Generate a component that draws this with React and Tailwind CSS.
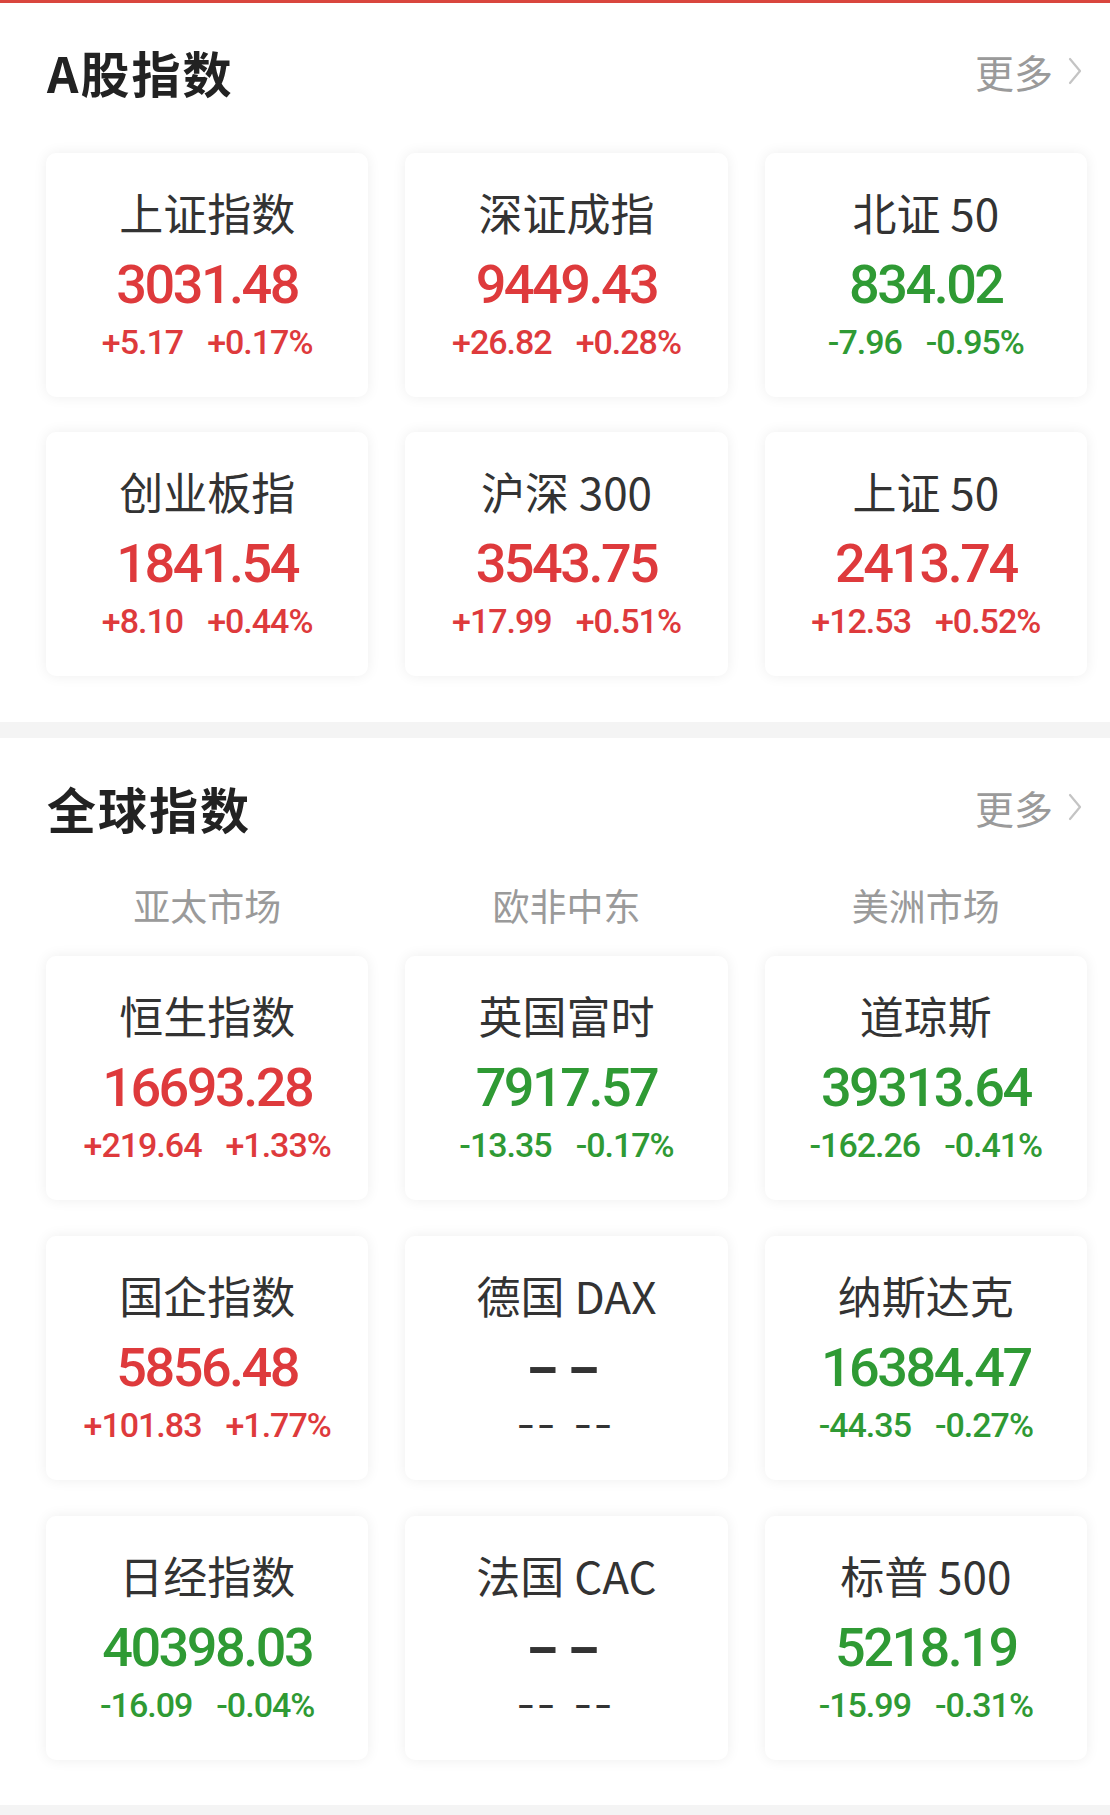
const RED = "text-[#de3a3c]";
const GREEN = "text-[#2f9a34]";

const aIndexes = [
  { name: "上证指数", price: "3031.48", change: "+5.17", pct: "+0.17%", up: true },
  { name: "深证成指", price: "9449.43", change: "+26.82", pct: "+0.28%", up: true },
  { name: "北证 50", price: "834.02", change: "-7.96", pct: "-0.95%", up: false },
  { name: "创业板指", price: "1841.54", change: "+8.10", pct: "+0.44%", up: true },
  { name: "沪深 300", price: "3543.75", change: "+17.99", pct: "+0.51%", up: true },
  { name: "上证 50", price: "2413.74", change: "+12.53", pct: "+0.52%", up: true },
];

const globalIndexes = [
  { name: "恒生指数", price: "16693.28", change: "+219.64", pct: "+1.33%", up: true },
  { name: "英国富时", price: "7917.57", change: "-13.35", pct: "-0.17%", up: false },
  { name: "道琼斯", price: "39313.64", change: "-162.26", pct: "-0.41%", up: false },
  { name: "国企指数", price: "5856.48", change: "+101.83", pct: "+1.77%", up: true },
  { name: "德国 DAX", price: null },
  { name: "纳斯达克", price: "16384.47", change: "-44.35", pct: "-0.27%", up: false },
  { name: "日经指数", price: "40398.03", change: "-16.09", pct: "-0.04%", up: false },
  { name: "法国 CAC", price: null },
  { name: "标普 500", price: "5218.19", change: "-15.99", pct: "-0.31%", up: false },
];

const cjk = { fontFamily: '"Noto Sans CJK SC", "Noto Sans", sans-serif' };
const num = { fontFamily: 'Roboto, "Noto Sans CJK SC", sans-serif' };

const SectionHeader = ({ title }) => (
  <div className="flex items-center justify-between h-[60px] pl-[47px] pr-[27px]">
    <h2 className="text-[49px] font-bold text-[#222] leading-none tracking-[2px]" style={cjk}>
      {title}
    </h2>
    <div className="flex items-center gap-[14px] text-[#9a9a9a]" style={cjk}>
      <span className="text-[39px] leading-none">更多</span>
      <svg width="16" height="30" viewBox="0 0 16 30" fill="none">
        <polyline points="3,3 13,15 3,27" stroke="#c4c4c4" strokeWidth="2.2" strokeLinecap="round" strokeLinejoin="round" />
      </svg>
    </div>
  </div>
);

const IndexCard = ({ item }) => {
  const color = item.up ? RED : GREEN;
  return (
    <div className="h-[244px] bg-white rounded-[10px] shadow-[0_0_14px_rgba(0,0,0,0.07)] flex flex-col items-center pt-[34px]">
      <div className="h-[50px] leading-[50px] text-[44px] text-[#333]" style={cjk}>
        {item.name}
      </div>
      {item.price ? (
        <>
          <div className={`mt-[16px] h-[64px] leading-[64px] text-[54px] font-medium tracking-[-2.5px] ${color}`} style={num}>
            {item.price}
          </div>
          <div className={`mt-[5px] h-[40px] leading-[40px] text-[34px] font-medium tracking-[-1px] flex gap-[24px] ${color}`} style={num}>
            <span>{item.change}</span>
            <span>{item.pct}</span>
          </div>
        </>
      ) : (
        <>
          <div className="mt-[16px] h-[64px] leading-[64px] text-[54px] font-bold text-[#333]" style={num}>
            <span className="inline-block scale-x-[1.7] tracking-[3px]">--</span>
          </div>
          <div className="mt-[5px] h-[40px] leading-[40px] text-[34px] font-medium text-[#333] flex gap-[30px]" style={num}>
            <span className="inline-block scale-x-[1.5] tracking-[2px]">--</span>
            <span className="inline-block scale-x-[1.5] tracking-[2px]">--</span>
          </div>
        </>
      )}
    </div>
  );
};

export default function App() {
  return (
    <div className="w-[1110px] min-h-[1815px] bg-[#f4f4f4]">
      <div className="h-[3px] bg-[#d9463e]" />

      <section className="bg-white pt-[38px] pb-[46px]">
        <SectionHeader title="A股指数" />
        <div className="mt-[52px] pl-[46px] pr-[23px] grid grid-cols-3 gap-x-[37px] gap-y-[35px]">
          {aIndexes.map((item) => (
            <IndexCard key={item.name} item={item} />
          ))}
        </div>
      </section>

      <section className="mt-[16px] bg-white pt-[39px] pb-[45px]">
        <SectionHeader title="全球指数" />
        <div className="mt-[44px] pl-[46px] pr-[23px] grid grid-cols-3 gap-x-[37px]">
          {["亚太市场", "欧非中东", "美洲市场"].map((t) => (
            <div key={t} className="h-[50px] flex items-center justify-center text-[37px] text-[#9a9a9a]" style={cjk}>
              {t}
            </div>
          ))}
        </div>
        <div className="mt-[25px] pl-[46px] pr-[23px] grid grid-cols-3 gap-x-[37px] gap-y-[36px]">
          {globalIndexes.map((item) => (
            <IndexCard key={item.name} item={item} />
          ))}
        </div>
      </section>
    </div>
  );
}
